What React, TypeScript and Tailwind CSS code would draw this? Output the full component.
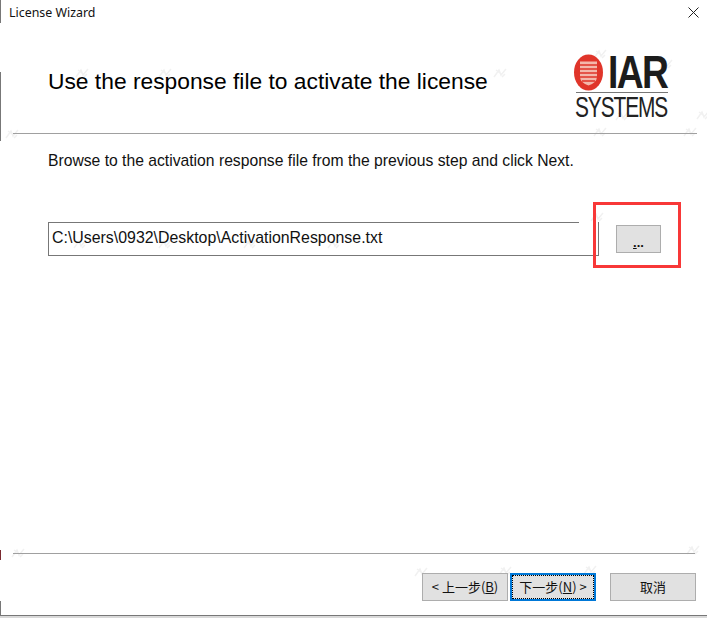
const marks: [number, number][] = [
  [12, 134], [82, 73], [165, 73], [500, 73], [600, 54], [666, 64], [622, 116], [703, 115],
  [600, 132], [690, 132], [80, 244], [165, 244], [250, 244], [334, 244], [18, 553], [693, 550],
  [421, 572], [505, 571], [590, 570], [675, 578], [597, 217],
];

function Mark({ x, y }: { x: number; y: number }) {
  return (
    <svg className="absolute" style={{ left: x - 8, top: y - 6 }} width="16" height="12" viewBox="0 0 16 12" fill="none" stroke="#f1f1f1" strokeWidth="1.500">
      <path d="M2 10L7 3L9 8L14 2M4 3L8 6M10 10L13 7" />
    </svg>
  );
}

export default function App() {
  return (
    <div className="relative w-[707px] h-[618px] bg-white overflow-hidden flex flex-col font-['Liberation_Sans',Arial,sans-serif] text-black">
      {marks.map(([x, y]) => <Mark key={`${x}-${y}`} x={x} y={y} />)}

      {/* window edge fragments */}
      <div className="absolute left-0 top-0 w-px h-[23px] bg-[#777]" />
      <div className="absolute left-0 top-[72px] w-px h-[69px] bg-[#777]" />
      <div className="absolute left-0 top-[550px] w-px h-[10px] bg-[#7a2a30]" />
      <div className="absolute left-0 top-[601px] w-px h-[15px] bg-[#777]" />

      {/* title bar */}
      <div className="relative h-[27px] flex items-start justify-between">
        <span className="pl-[9px] pt-[5px] text-[12.4px] leading-[16px] font-['Noto_Sans',sans-serif] text-[#111]">License Wizard</span>
        <svg className="mt-[7px] mr-[8px]" width="11" height="11" viewBox="0 0 11 11" fill="none" stroke="#222" strokeWidth="1"><path d="M0.5 0.5L10.5 10.5M10.5 0.5L0.5 10.5" /></svg>
      </div>

      {/* header */}
      <div className="relative h-[106px] flex items-start justify-between pl-[48px] pr-[39px]">
        <h1 className="mt-[39px] text-[22.8px] leading-[30px] font-normal whitespace-nowrap">Use the response file to activate the license</h1>
        <div className="mt-[27px] w-[94px] flex flex-col items-start">
          <div className="flex items-center h-[37px]">
            <svg width="29" height="37" viewBox="0 0 29 37" className="shrink-0">
              <ellipse cx="14.500" cy="18.500" rx="14.500" ry="18" fill="#e0352a" />
              <path d="M6 7.500 H23 V23 Q22.500 29 14.500 31.500 Q6.500 29 6 23 Z" fill="#f3b7ab" />
              <path d="M6 11H23M6 15H23M6 19H23M6 23H23M8 27H21" stroke="#e0352a" strokeWidth="1.500" />
            </svg>
            <span className="ml-[5px] text-[46px] leading-[37px] font-bold tracking-[-2px] text-[#1c1c1c] scale-x-[0.81] origin-left">IAR</span>
          </div>
          <div className="ml-[2px] mt-[1px] w-[92px] h-px bg-[#777]" />
          <span className="ml-[1px] mt-[1px] text-[29px] leading-[27px] tracking-[-1.500px] text-[#222] scale-x-[0.72] origin-left whitespace-nowrap">SYSTEMS</span>
        </div>
      </div>

      {/* separator */}
      <div className="relative ml-[13px] w-[684px] h-px bg-[#a0a0a0]" />

      {/* body */}
      <p className="relative pl-[48px] mt-[18px] text-[15.7px] leading-[18px] text-[#111] whitespace-nowrap">Browse to the activation response file from the previous step and click Next.</p>

      <div className="relative mt-[52px] ml-[48px] flex items-start">
        <div className="relative w-[551px] h-[34px] border-l border-r border-b border-[#777] flex items-center pl-[3px]">
          <div className="absolute -left-px top-0 w-[531px] h-px bg-[#777]" />
          <span className="text-[15.9px] leading-[18px] text-[#111] mt-[-2px]">C:\Users\0932\Desktop\ActivationResponse.txt</span>
        </div>
        <button className="ml-[17px] mt-[3px] w-[45px] h-[28px] bg-[#e1e1e1] border border-[#adadad] text-[13px] leading-[12px] pt-[8px] font-bold text-[#111]"><span className="underline">.</span>..</button>
      </div>

      {/* red highlight */}
      <div className="absolute left-[593px] top-[202px] w-[88px] h-[66px] border-[3px] border-[#f83838]" />

      <div className="flex-1" />

      {/* footer separator */}
      <div className="relative ml-[13px] w-[682px] h-px bg-[#a0a0a0]" />

      {/* buttons */}
      <div className="relative mt-[19px] h-[28px] flex items-start pl-[422px] text-[13px] font-['Noto_Sans_CJK_SC','Liberation_Sans',sans-serif] text-[#111]">
        <button className="w-[86px] h-[28px] bg-[#e1e1e1] border border-[#adadad] flex items-center justify-center whitespace-nowrap">&lt; 上一步(<span className="underline">B</span>)</button>
        <button className="ml-[2px] w-[86px] h-[28px] bg-[#e1e1e1] border-2 border-[#0078d7] flex items-center justify-center whitespace-nowrap outline-1 outline-dotted outline-black outline-offset-[-3px]">下一步(<span className="underline">N</span>) &gt;</button>
        <button className="ml-[14px] w-[86px] h-[28px] bg-[#e1e1e1] border border-[#adadad] flex items-center justify-center">取消</button>
      </div>

      <div className="relative mt-[14px] h-px bg-[#777]" />
      <div className="relative h-[2px] bg-[#d9d9d9]" />
    </div>
  );
}
